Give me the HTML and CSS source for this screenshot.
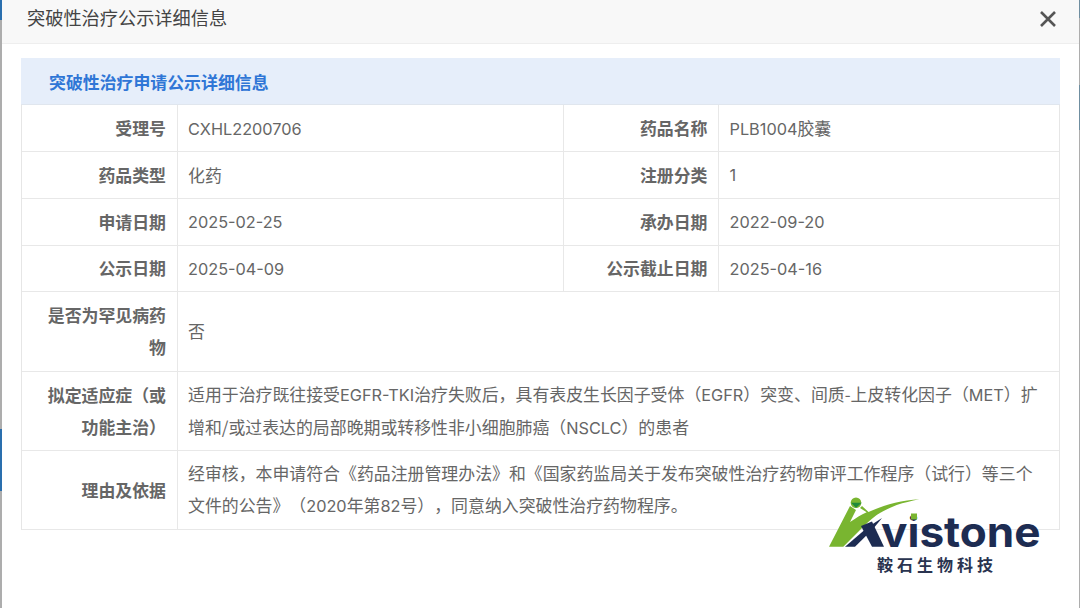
FILE: index.html
```html
<!DOCTYPE html>
<html lang="zh-CN">
<head>
<meta charset="utf-8">
<title>突破性治疗公示详细信息</title>
<link rel="stylesheet" href="styles.css">
</head>
<body>
<div class="screen">
  <div class="edge edge-left"></div>
  <main class="dialog">
    <header class="dialog-head">
      <h1 class="dialog-title">突破性治疗公示详细信息</h1>
      <svg class="close" width="18" height="18" viewBox="0 0 18 18"><path d="M2 2 L16 16 M16 2 L2 16" stroke="#555" stroke-width="2.6" fill="none"/></svg>
    </header>
    <section class="panel">
      <h2 class="panel-title">突破性治疗申请公示详细信息</h2>
      <div class="info-grid">
        <div class="cell label">受理号</div>
        <div class="cell value"><p class="para"><span class="latin">CXHL2200706</span></p></div>
        <div class="cell label label-alt">药品名称</div>
        <div class="cell value last"><p class="para"><span class="latin">PLB1004</span>胶囊</p></div>

        <div class="cell label">药品类型</div>
        <div class="cell value">化药</div>
        <div class="cell label label-alt">注册分类</div>
        <div class="cell value last"><p class="para"><span class="latin">1</span></p></div>

        <div class="cell label">申请日期</div>
        <div class="cell value"><p class="para"><span class="latin">2025-02-25</span></p></div>
        <div class="cell label label-alt">承办日期</div>
        <div class="cell value last"><p class="para"><span class="latin">2022-09-20</span></p></div>

        <div class="cell label">公示日期</div>
        <div class="cell value"><p class="para"><span class="latin">2025-04-09</span></p></div>
        <div class="cell label label-alt">公示截止日期</div>
        <div class="cell value last"><p class="para"><span class="latin">2025-04-16</span></p></div>

        <div class="cell label">是否为罕见病药物</div>
        <div class="cell value wide">否</div>

        <div class="cell label">拟定适应症（或功能主治）</div>
        <div class="cell value wide"><p class="para">适用于治疗既往接受<span class="latin">EGFR-TKI</span>治疗失败后，具有表皮生长因子受体（<span class="latin">EGFR</span>）突变、间质-上皮转化因子（<span class="latin">MET</span>）扩增和/或过表达的局部晚期或转移性非小细胞肺癌（<span class="latin">NSCLC</span>）的患者</p></div>

        <div class="cell label">理由及依据</div>
        <div class="cell value wide"><p class="para">经审核，本申请符合《药品注册管理办法》和《国家药监局关于发布突破性治疗药物审评工作程序（试行）等三个文件的公告》（<span class="latin">2020</span>年第<span class="latin">82</span>号），同意纳入突破性治疗药物程序。</p></div>
      </div>
    </section>
  </main>
  <div class="edge edge-right"></div>
  <div class="logo">
    <svg class="logo-art" width="220" height="70" viewBox="0 0 220 70">
      <path class="logo-green" d="M0 56.700 L21 16 L27 20 L21 32 C27 28 32 25 37.700 22.300 L31 18 L33 16 L39.500 22 C54 15.500 72 10 90.300 9.300 C82 11 75 12.700 67.700 15 C60 18 53 21.500 47.700 25 C41 30 36 35 31 40 L14.300 56.700 Z"/>
      <circle class="logo-green" cx="27" cy="12.700" r="5.300"/>
      <path class="logo-leaf" d="M22 12.700 H32.700 L27 17.700 Z"/>
      <path class="logo-navy" d="M16 56.700 L39 37 L53 28 L44 39 L26 56.700 Z"/>
      <path class="logo-navy" d="M32 36 L43 31.500 L55 56.700 H43 Z"/>
      <text class="logo-word" transform="translate(52 56.700) scale(1.05 1)">vistone</text>
      <rect class="logo-dot" x="82" y="23.500" width="6" height="6"/>
    </svg>
    <div class="logo-cn">鞍石生物科技</div>
  </div>
</div>
</body>
</html>
```
FILE: styles.css
```css
* { box-sizing: border-box; }
html, body { margin: 0; padding: 0; }
body {
  width: 1080px;
  height: 608px;
  overflow: hidden;
  background: #fff;
  font-family: "Noto Sans CJK SC", "Noto Sans", sans-serif;
  text-spacing-trim: space-all;
  color: #666;
}
.screen {
  position: relative;
  display: flex;
  width: 1080px;
  height: 608px;
}
.edge { flex: none; }
.edge-left {
  width: 2px;
  background: linear-gradient(to bottom,
    #2a6fae 0, #2a6fae 20px, #adadad 20px, #adadad 429px,
    #2a6fae 429px, #2a6fae 491px, #adadad 491px, #adadad 100%);
}
.edge-right {
  width: 1px;
  background: linear-gradient(to bottom,
    #6f8ea0 0, #6f8ea0 18px, #adadad 18px, #adadad 85px,
    #6f8ea0 85px, #6f8ea0 130px, #adadad 130px, #adadad 100%);
}
.dialog {
  flex: 1;
  min-width: 0;
}
.dialog-head {
  display: flex;
  align-items: center;
  justify-content: space-between;
  height: 44px;
  padding: 0 22px 6px 25px;
  background: #f8f8f8;
  border-bottom: 1px solid #eee;
}
.dialog-title {
  margin: 0 0 3px;
  font-size: 18.2px;
  font-weight: 400;
  color: #444;
}
.close { display: block; }
.panel {
  width: 1039px;
  margin: 14px 0 0 19px;
  border-left: 1px solid #e6e6e6;
  border-right: 1px solid #e6e6e6;
}
.panel-title {
  display: flex;
  align-items: center;
  height: 47.25px;
  margin: 0 -1px;
  padding-left: 28px;
  background: #e6eefa;
  border-bottom: 1px solid #e0e6ee;
  font-size: 16.9px;
  font-weight: 700;
  color: #2f76d6;
}
.info-grid {
  display: grid;
  grid-template-columns: 156px 385.5px 155.5px 1fr;
  grid-template-rows: repeat(4, 46.75px) repeat(3, 79.25px);
  font-size: 16.9px;
  line-height: 32px;
}
.cell {
  display: flex;
  align-items: center;
  border-bottom: 1px solid #e8e8e8;
  border-right: 1px solid #e8e8e8;
}
.label {
  justify-content: flex-end;
  padding: 0 11px 0 20px;
  text-align: right;
  font-weight: 700;
  color: #666;
}
.label-alt { padding-right: 10.500px; }
.value {
  padding: 0 10px;
  color: #666;
}
.latin {
  font-family: Inter, "Noto Sans", sans-serif;
  font-size: 16.300px;
}
.para { margin: 0; }
.last {
  padding-left: 10.500px;
  border-right: 0;
}
.wide {
  grid-column: span 3;
  border-right: 0;
}
.logo {
  position: absolute;
  left: 829px;
  top: 490px;
  width: 220px;
}
.logo-art { display: block; }
.logo-green { fill: #79b530; }
.logo-leaf { fill: #1f8a3c; }
.logo-navy { fill: #1d2c52; }
.logo-word {
  font-family: Inter, "Noto Sans", sans-serif;
  font-size: 42px;
  font-weight: 700;
  fill: #1d2c52;
}
.logo-dot { fill: #79b530; }
.logo-cn {
  margin: -5px 0 0 48px;
  font-size: 16px;
  font-weight: 700;
  line-height: 18px;
  letter-spacing: 4px;
  color: #2a3450;
  white-space: nowrap;
}
```
